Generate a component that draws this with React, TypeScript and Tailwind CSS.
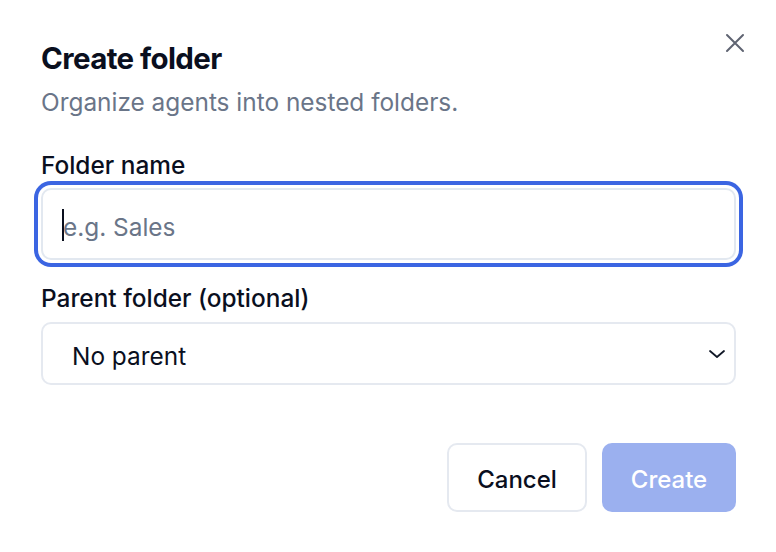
import React from "react";

export default function App() {
  return (
    <div
      className="w-[776px] h-[552px] bg-white relative overflow-hidden"
      style={{ fontFamily: "Inter, 'Noto Sans', sans-serif" }}
    >
      <button className="absolute left-[722px] top-[30px] w-[26px] h-[26px] flex items-center justify-center text-[#5f6472]">
        <svg width="22" height="22" viewBox="0 0 22 22" fill="none" stroke="currentColor" strokeWidth="2" strokeLinecap="round">
          <path d="M3 3L19 19M19 3L3 19" />
        </svg>
      </button>
      <div className="flex flex-col pl-[41px] pr-[40px] pt-[42px]">
        <h2 className="text-[29.5px] leading-[32px] font-bold text-[#0a0f1e] tracking-[-0.6px]">Create folder</h2>
        <p className="mt-[12px] text-[24.4px] leading-[32px] text-[#6a7588]">Organize agents into nested folders.</p>

        <label className="mt-[33px] text-[24.4px] leading-[28px] font-medium text-[#0a0f1e]">Folder name</label>
        <div className="relative mt-[9px]">
          <input
            readOnly
            placeholder="e.g. Sales"
            className="w-full h-[72px] rounded-[10px] border-2 border-[#e2e8f0] bg-white pl-[20px] pt-[5px] text-[24.4px] text-[#0a0f1e] placeholder:text-[#6a7588] outline-none ring-[4px] ring-[#3b65e2] ring-offset-[3px] ring-offset-white"
          />
          <span className="absolute left-[21px] top-[21px] w-[2px] h-[32px] bg-[#0a0f1e]" />
        </div>

        <label className="mt-[24px] text-[24.4px] leading-[28px] font-medium text-[#0a0f1e]">Parent folder (optional)</label>
        <div className="mt-[10px] h-[63px] rounded-[10px] border-2 border-[#e5e9f0] bg-white flex items-center justify-between pl-[29px] pr-[8px]">
          <span className="text-[24.4px] text-[#0a0f1e] pt-[5px]">No parent</span>
          <svg width="18" height="12" viewBox="0 0 18 12" fill="none" stroke="#111827" strokeWidth="1.8" strokeLinecap="round" strokeLinejoin="round">
            <path d="M2 3L9 9L16 3" />
          </svg>
        </div>

        <div className="mt-[58px] flex justify-end gap-[15px]">
          <button className="w-[140px] h-[69px] rounded-[10px] border-2 border-[#e5e9f0] bg-white pt-[4px] text-[24px] font-medium text-[#0a0f1e]">Cancel</button>
          <button className="w-[134px] h-[69px] rounded-[10px] bg-[#9bb0ef] pt-[4px] text-[24px] font-medium text-white">Create</button>
        </div>
      </div>
    </div>
  );
}
